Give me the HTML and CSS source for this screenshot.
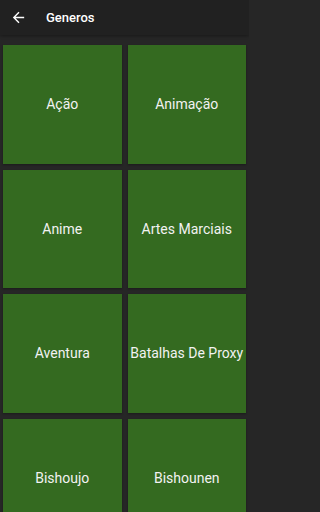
FILE: index.html
```html
<!DOCTYPE html>
<html>
<head>
<meta charset="utf-8">
<meta name="viewport" content="width=249">
<link rel="stylesheet" href="styles.css">
</head>
<body>
<div class="screen">
<header class="toolbar">
  <svg class="back" width="17" height="17" viewBox="0 0 24 24"><path d="M20 11H7.83l5.59-5.59L12 4l-8 8 8 8 1.41-1.41L7.83 13H20v-2z" fill="#fff"/></svg>
  <span class="title">Generos</span>
</header>
<main class="grid">
  <div class="card">Ação</div>
  <div class="card">Animação</div>
  <div class="card">Anime</div>
  <div class="card">Artes Marciais</div>
  <div class="card">Aventura</div>
  <div class="card">Batalhas De Proxy</div>
  <div class="card">Bishoujo</div>
  <div class="card">Bishounen</div>
</main>
</div>
</body>
</html>
```
FILE: styles.css
```css
html, body {
  margin: 0;
  padding: 0;
  background: #262626;
  font-family: Roboto, "Noto Sans", sans-serif;
  overflow: hidden;
  height: 512px;
}
.screen {
  width: 249px;
  height: 512px;
  overflow: hidden;
  background: #262626;
}
.toolbar {
  height: 35px;
  background: #212121;
  display: flex;
  align-items: center;
  box-shadow: 0 1px 3px rgba(0,0,0,0.35);
  position: relative;
  z-index: 1;
}
.back {
  margin-left: 9.5px;
  margin-right: 19.5px;
}
.title {
  color: #fff;
  font-size: 13px;
  font-weight: 500;
  padding-bottom: 1px;
}
.grid {
  display: grid;
  grid-template-columns: 1fr 1fr;
  padding: 7px 0 0 0;
}
.card {
  margin: 3px;
  height: 118.5px;
  background: #346a20;
  color: #f2f2f2;
  font-size: 14px;
  display: flex;
  align-items: center;
  justify-content: center;
  text-align: center;
  box-shadow: 0 1px 2px rgba(0,0,0,0.3);
}
```
